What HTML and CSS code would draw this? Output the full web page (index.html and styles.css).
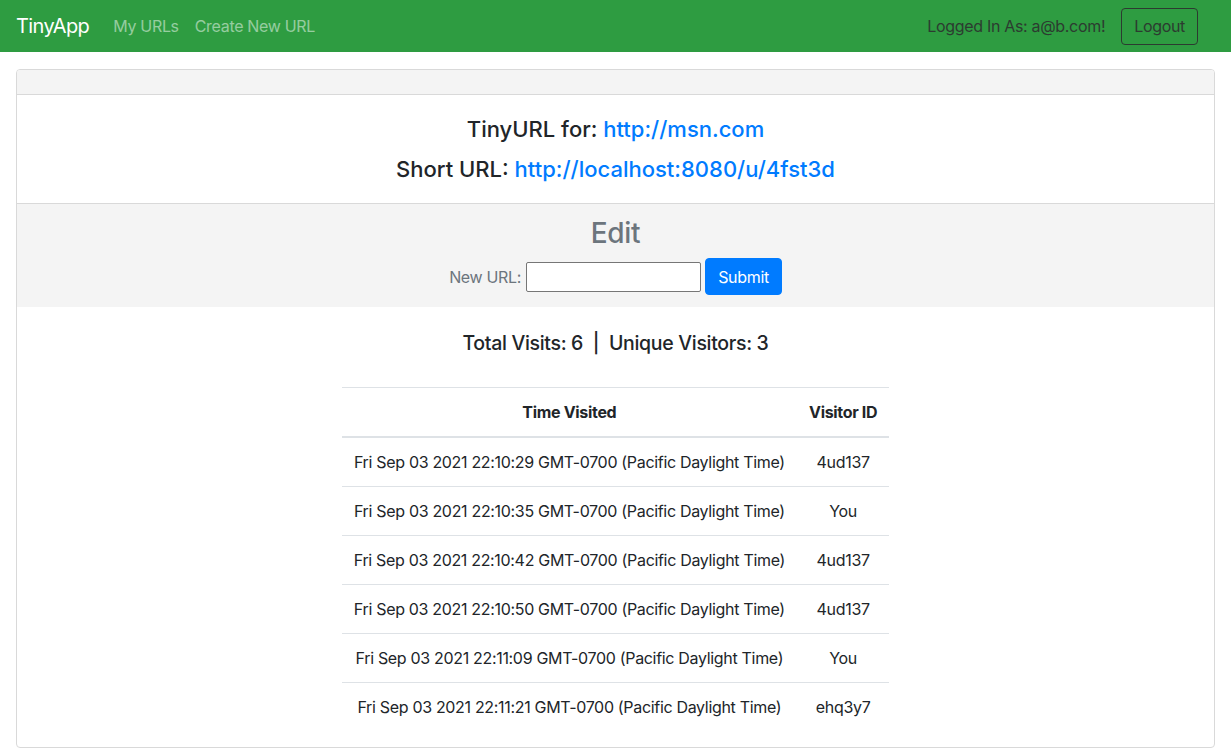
FILE: index.html
```html
<!DOCTYPE html>
<html lang="en">
<head>
<meta charset="utf-8">
<title>TinyApp</title>
<link rel="stylesheet" href="styles.css">
</head>
<body>
<nav class="navbar">
  <a class="brand" href="#">TinyApp</a>
  <ul class="nav-links">
    <li><a href="#">My URLs</a></li>
    <li><a href="#">Create New URL</a></li>
  </ul>
  <div class="nav-right">
    <span class="user">Logged In As: a@b.com!</span>
    <button class="btn-logout" type="button">Logout</button>
  </div>
</nav>
<main class="container">
  <div class="card">
    <div class="card-header"></div>
    <div class="card-body">
      <h4 class="url-line first">TinyURL for: <a href="#">http://msn.com</a></h4>
      <h4 class="url-line">Short URL: <a href="#">http://localhost:8080/u/4fst3d</a></h4>
    </div>
    <div class="edit-section">
      <h3 class="edit-title">Edit</h3>
      <form class="edit-form">
        <label for="newurl">New URL:</label>
        <input id="newurl" type="text">
        <button class="btn-submit" type="button">Submit</button>
      </form>
    </div>
    <h5 class="stats">Total Visits: 6&nbsp;&nbsp;|&nbsp;&nbsp;Unique Visitors: 3</h5>
    <table class="visits">
      <thead>
        <tr><th>Time Visited</th><th>Visitor ID</th></tr>
      </thead>
      <tbody>
        <tr><td>Fri Sep 03 2021 22:10:29 GMT-0700 (Pacific Daylight Time)</td><td>4ud137</td></tr>
        <tr><td>Fri Sep 03 2021 22:10:35 GMT-0700 (Pacific Daylight Time)</td><td>You</td></tr>
        <tr><td>Fri Sep 03 2021 22:10:42 GMT-0700 (Pacific Daylight Time)</td><td>4ud137</td></tr>
        <tr><td>Fri Sep 03 2021 22:10:50 GMT-0700 (Pacific Daylight Time)</td><td>4ud137</td></tr>
        <tr><td>Fri Sep 03 2021 22:11:09 GMT-0700 (Pacific Daylight Time)</td><td>You</td></tr>
        <tr><td>Fri Sep 03 2021 22:11:21 GMT-0700 (Pacific Daylight Time)</td><td>ehq3y7</td></tr>
      </tbody>
    </table>
  </div>
</main>
</body>
</html>
```

FILE: styles.css
```css
* { box-sizing: border-box; }
html, body { margin: 0; padding: 0; }
body {
  font-family: Inter, "Noto Sans", "Liberation Sans", sans-serif;
  font-size: 16px;
  line-height: 1.5;
  letter-spacing: -0.02em;
  color: #212529;
  background: #fff;
}
a { color: #007bff; text-decoration: none; }

.navbar {
  height: 52px;
  background: #2e9c41;
  display: flex;
  align-items: center;
  padding: 0 33px 0 16px;
}
.brand {
  color: #fff;
  font-size: 20px;
  margin-right: 16px;
  line-height: 30px;
  letter-spacing: -0.03em;
}
.nav-links {
  display: flex;
  list-style: none;
  margin: 0;
  padding: 0;
}
.nav-links a {
  display: block;
  padding: 8px;
  color: rgba(255, 255, 255, 0.5);
}
.nav-right {
  margin-left: auto;
  display: flex;
  align-items: center;
  gap: 16px;
}
.user { color: #2c3b30; }
.btn-logout {
  font: inherit;
  letter-spacing: inherit;
  color: #2c3b30;
  background: transparent;
  border: 1px solid #2c3b30;
  border-radius: 4px;
  height: 37px;
  padding: 0 12px;
}

.container { padding: 17px 16px 5px; }
.card {
  border: 1px solid #d9d9d9;
  border-radius: 4px;
  overflow: hidden;
}
.card-header {
  height: 25px;
  background: #f4f4f4;
  border-bottom: 1px solid #d9d9d9;
}
.card-body {
  padding: 20px 20px 19px;
  text-align: center;
}
.url-line {
  margin: 0;
  font-size: 22px;
  font-weight: 500;
  line-height: 29px;
  letter-spacing: 0;
}
.url-line.first { margin-bottom: 11px; }

.edit-section {
  background: #f4f4f4;
  border-top: 1px solid #d9d9d9;
  padding: 12px 0 12px;
  text-align: center;
  color: #6c757d;
}
.edit-title {
  margin: 0 0 8px;
  font-size: 28px;
  font-weight: 500;
  line-height: 34px;
}
.edit-form {
  display: flex;
  justify-content: center;
  align-items: center;
  gap: 4px;
}
.edit-form label { margin-right: 1px; }
.edit-form input {
  width: 175px;
  height: 30px;
  border: 1px solid #767676;
  border-radius: 2px;
  font: inherit;
  padding: 0 4px;
  background: #fff;
}
.btn-submit {
  font: inherit;
  letter-spacing: inherit;
  color: #fff;
  background: #007bff;
  border: 1px solid #007bff;
  border-radius: 4px;
  height: 37px;
  padding: 0 12px;
}

.stats {
  margin: 24px 0 32px;
  text-align: center;
  font-size: 19.5px;
  font-weight: 500;
  line-height: 24px;
}
.visits {
  margin: 0 auto 16px;
  border-collapse: collapse;
  text-align: center;
}
.visits th, .visits td {
  padding: 12px;
  border-top: 1px solid #dee2e6;
  line-height: 24px;
}
.visits th {
  font-weight: 700;
  border-bottom: 2px solid #dee2e6;
}
```
